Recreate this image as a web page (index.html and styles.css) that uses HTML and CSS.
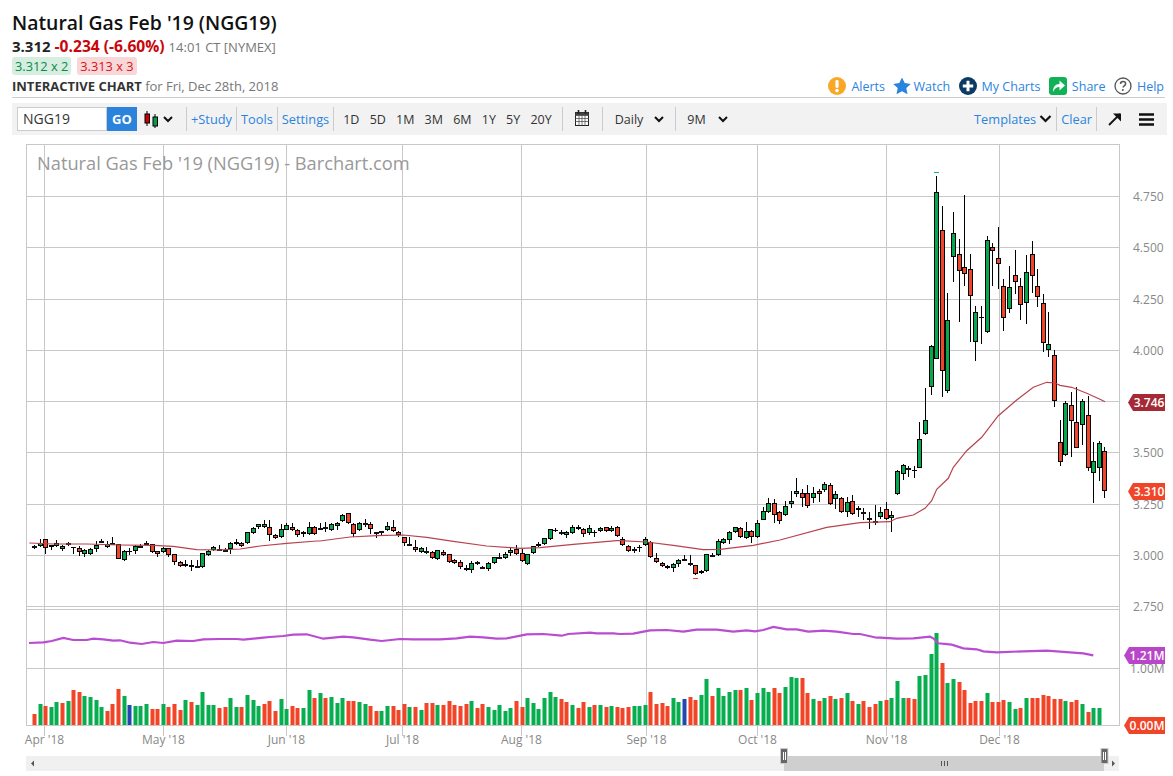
FILE: index.html
```html
<!DOCTYPE html>
<html lang="en">
<head>
<meta charset="utf-8">
<title>Natural Gas Feb '19 (NGG19)</title>
<link rel="stylesheet" href="styles.css">
</head>
<body>
<header class="head">
  <h1 class="title">Natural Gas Feb '19 (NGG19)</h1>
  <div class="quote">
    <span class="last">3.312</span>
    <span class="change">-0.234 (-6.60%)</span>
    <span class="time">14:01 CT [NYMEX]</span>
  </div>
  <div class="pills">
    <span class="pill bid">3.312 x 2</span>
    <span class="pill ask">3.313 x 3</span>
  </div>
  <div class="subrow">
    <div class="sub"><b>INTERACTIVE CHART</b> for Fri, Dec 28th, 2018</div>
    <nav class="links">
      <a class="link"><svg class="ico" viewBox="0 0 18 18"><circle cx="9" cy="9" r="9" fill="#f9a825"/><rect x="7.4" y="3" width="3.2" height="8" rx="1.4" fill="#fff"/><circle cx="9" cy="13.6" r="1.8" fill="#fff"/></svg><span class="alerts">Alerts</span></a>
      <a class="link"><svg class="ico star" viewBox="0 0 18 18"><path d="M9 .5l2.7 5.6 6.1.8-4.5 4.2 1.2 6.1L9 14.2l-5.5 3 1.2-6.1L.2 6.9l6.1-.8z" fill="#2a84de"/></svg><span>Watch</span></a>
      <a class="link"><svg class="ico" viewBox="0 0 18 18"><circle cx="9" cy="9" r="9" fill="#0b3a62"/><path d="M7.5 3.8h3v3.7h3.7v3h-3.7v3.7h-3v-3.7H3.800v-3h3.700z" fill="#fff"/></svg><span>My Charts</span></a>
      <a class="link"><svg class="ico" viewBox="0 0 18 18"><rect width="18" height="18" rx="3" fill="#10b255"/><path d="M4 15c0-5 2-8 6.500-8V3.500L16 8.500l-5.500 5V10C7.500 10 5.500 11.500 4 15z" fill="#fff"/></svg><span>Share</span></a>
      <a class="link"><svg class="ico" viewBox="0 0 18 18"><circle cx="9" cy="9" r="8" fill="none" stroke="#555" stroke-width="1.300"/><path d="M6.500 7c0-1.600 1.100-2.500 2.600-2.500s2.500.9 2.500 2.200c0 1.100-.7 1.600-1.400 2.100-.7.5-1 .9-1 1.700" fill="none" stroke="#555" stroke-width="1.500"/><circle cx="8.800" cy="13" r="1" fill="#555"/></svg><span>Help</span></a>
    </nav>
  </div>
</header>

<div class="toolbar">
  <div class="symbol"><span class="symbol-input">NGG19</span><span class="go">GO</span></div>
  <svg class="candle-ico" viewBox="0 0 16 18"><path d="M3 1v15M11 4v14" stroke="#000" stroke-width="1"/><rect x="1" y="4" width="4.500" height="9" fill="#c00" stroke="#000"/><rect x="9" y="7" width="4.500" height="9" fill="#0a9a48" stroke="#000"/></svg>
  <svg class="chev" viewBox="0 0 10 7"><path d="M1 1l4 4 4-4" fill="none" stroke="#111" stroke-width="2"/></svg>
  <i class="sep first"></i>
  <a class="tlink study">+Study</a><i class="sep"></i>
  <a class="tlink">Tools</a><i class="sep"></i>
  <a class="tlink">Settings</a><i class="sep"></i>
  <div class="ranges"><span>1D</span><span>5D</span><span>1M</span><span>3M</span><span>6M</span><span>1Y</span><span>5Y</span><span>20Y</span></div>
  <i class="sep"></i>
  <svg class="cal" viewBox="0 0 14 16"><rect x=".5" y="2.500" width="13" height="13" fill="#fff" stroke="#222"/><path d="M.5 5.500h13M.5 8.500h13M.5 11.500h13M4 5.500v10M7 5.500v10M10 5.500v10" stroke="#555" stroke-width=".8"/><rect x=".5" y="2.500" width="13" height="3" fill="#444"/><path d="M3.500 0v4M10.500 0v4" stroke="#222" stroke-width="1.600"/></svg>
  <i class="sep"></i>
  <span class="plain daily">Daily</span>
  <svg class="chev" viewBox="0 0 10 7"><path d="M1 1l4 4 4-4" fill="none" stroke="#111" stroke-width="2"/></svg>
  <i class="sep"></i>
  <span class="plain nine">9M</span>
  <svg class="chev" viewBox="0 0 10 7"><path d="M1 1l4 4 4-4" fill="none" stroke="#111" stroke-width="2"/></svg>
  <div class="tright">
    <a class="tlink">Templates</a>
    <svg class="chev wide" viewBox="0 0 12 8"><path d="M1 1l5 5 5-5" fill="none" stroke="#111" stroke-width="2.200"/></svg>
    <i class="sep"></i>
    <a class="tlink">Clear</a>
    <i class="sep"></i>
    <svg class="expand" viewBox="0 0 14 14"><path d="M1 13L12 2" stroke="#111" stroke-width="1.800"/><path d="M5 1.500h8v8z" fill="#111"/></svg>
    <svg class="menu" viewBox="0 0 15 13"><path d="M0 1.500h15M0 6.500h15M0 11.500h15" stroke="#111" stroke-width="2.400"/></svg>
  </div>
</div>

<div id="chart" class="chart"></div>
<script src="chart.js"></script>
</body>
</html>
```
FILE: styles.css
```css
* { box-sizing: border-box; }
html, body { margin: 0; padding: 0; background: #fff; }
body {
  width: 1173px;
  height: 776px;
  overflow: hidden;
  font-family: "Open Sans", "Liberation Sans", sans-serif;
  color: #333;
}
.head {
  margin: 0 8px 0 12px;
  padding-top: 9px;
  height: 98px;
  border-bottom: 1px solid #ccc;
}
.title {
  margin: 0;
  font-size: 19.4px;
  line-height: 27px;
  font-weight: 600;
  color: #111;
}
.quote { display: flex; align-items: baseline; gap: 4px; height: 20px; line-height: 20px; }
.last { font-size: 15px; font-weight: 700; color: #222; }
.change { font-size: 15.6px; font-weight: 700; color: #c8060c; }
.time { font-size: 13px; color: #777; }
.pills { display: flex; gap: 6px; margin-top: 1px; height: 19px; }
.pill { font-size: 12.8px; line-height: 18px; height: 18px; padding: 0 3px; border-radius: 3px; }
.bid { background: #d6eee0; color: #0a8a4a; }
.ask { background: #f8d7d8; color: #d8111a; }
.subrow { display: flex; justify-content: space-between; align-items: center; height: 20px; }
.sub { font-size: 13px; color: #777; margin-top: -1px; }
.sub b { color: #333; font-weight: 700; }
.links { display: flex; align-items: center; gap: 8.5px; margin-right: 1px; }
.link { display: flex; align-items: center; gap: 5px; font-size: 12.5px; color: #2a84de; }
.ico { width: 18px; height: 18px; display: block; }
.star { margin-right: -3px; }
.toolbar {
  display: flex;
  align-items: center;
  margin: 5px 6px 0 12px;
  height: 32px;
  padding-left: 5px;
  background: #f2f2f2;
  font-size: 13px;
}
.symbol { display: flex; height: 24px; width: 120px; }
.symbol-input {
  width: 90px;
  height: 24px;
  background: #fff;
  border: 1px solid #ccc;
  padding-left: 5px;
  font-size: 14px;
  line-height: 22px;
  color: #333;
}
.go {
  width: 30px;
  height: 24px;
  background: #2b83dc;
  color: #fff;
  font-weight: 700;
  font-size: 13px;
  line-height: 24px;
  text-align: center;
}
.candle-ico { width: 16px; height: 18px; margin-left: 7px; }
.chev { width: 10px; height: 7px; margin-left: 3px; }
.sep { display: block; width: 1px; height: 24px; background: #ccc; margin: 0 4px; }
.sep.first { margin-left: 13px; }
.tlink { color: #2a84de; font-size: 12.8px; white-space: nowrap; }
.ranges { display: flex; gap: 10.2px; margin: 0 6px 0 5px; color: #333; font-size: 12.5px; }
.plain { color: #333; font-size: 12.5px; }
.cal { width: 14px; height: 16px; margin: 0 9px 3px 8px; }
.daily { margin-left: 8px; }
.daily + .chev { margin-left: 11px; margin-right: 7px; }
.nine { margin-left: 7px; }
.nine + .chev { margin-left: 12px; }
.tright { display: flex; align-items: center; margin-left: auto; margin-right: 13px; }
.chev.wide { width: 13px; height: 8px; margin-left: 3px; margin-right: 0; }
.tright .sep + .tlink { margin-left: 0; }
.expand { width: 14px; height: 14px; margin: 0 17px 0 7px; }
.menu { width: 15px; height: 13px; }
.chart { height: 636px; margin-top: 5px; }
.chart svg { display: block; width: 1173px; height: 636px; }
.grid { stroke: #c8c8c8; stroke-width: 1; shape-rendering: crispEdges; }
.wick { stroke: #000; stroke-width: 1; shape-rendering: crispEdges; }
.body { stroke: #000; stroke-width: 1; shape-rendering: crispEdges; }
.up { fill: #05a84e; }
.dn { fill: #f0452a; }
.dark { fill: #111; }
.v-G { fill: #07ae4f; }
.v-R { fill: #f24527; }
.v-B { fill: #2346b0; }
.ma { fill: none; stroke: #b8434f; stroke-width: 1.2px; }
.avg { fill: none; stroke: #b94cd0; stroke-width: 2.2px; }
.watermark { font-size: 18.25px; fill: #999; }
.axis { font-size: 12px; fill: #888; }
.badge { font-size: 12px; font-weight: 600; fill: #fff; }
.b-ma { fill: #a52a35; }
.b-px { fill: #f04528; }
.b-avg { fill: #b945c9; }
.track { fill: #f0f0f0; }
.thumb { fill: #cfcfcf; }
.handle { fill: #666; stroke: #ccc; stroke-width: 1; }
.hline { stroke: #fff; stroke-width: 1; shape-rendering: crispEdges; }
.grip { stroke: #555; stroke-width: 1; shape-rendering: crispEdges; }
.arrow { fill: #555; }
.mark-up { fill: #16b768; }
.mark-dn { fill: #f0452a; }
```
FILE: chart.js
```js
// Candle and volume values, read in 1/3 px units against a base offset.
var NS = "http://www.w3.org/2000/svg";
var X0 = 34, STEP = 5.604;

var CANDLES = [
 [480, "D 199 203 195 206;G 190 199 178 200;R 178 203 178 221;G 196 202 196 209;G 190 199 181 200;G 199 208 195 212;D 190 196 186 198;+ 200 200 200 221;R 205 217 198 227;G 211 223 208 230;G 208 223 205 224;G 196 208 183 215;D 184 187 178 190;G 193 202 183 203;D 190 195 171 195;R 193 238 193 238;G 214 241 211 242;+ 214 214 205 224;G 199 214 196 221;D 198 199 193 203;D 190 193 184 196;R 193 217 193 218;R 214 223 212 230;G 205 217 201 218;R 205 226 204 230;R 223 247 221 254;R 247 259 244 260;G 253 259 241 262;R 256 262 241 272;D 257 258 241 260;G 220 262 220 265;G 214 226 211 227;G 202 211 198 212;D 206 208 196 209;D 211 214 205 217;G 190 208 187 222;G 187 193 178 194;R 190 199 186 200;G 157 190 157 191;G 145 160 140 161;G 133 142 131 148;G 133 142 121 145;R 142 166 121 183;R 166 175 162 178;G 148 172 133 174;G 136 150 130 151;R 142 151 129 153;R 151 166 148 172;R 157 163 153 170;G 142 163 126 164;R 142 163 138 165"],
 [480, "D 145 147 130 150;D 142 145 127 155;G 133 151 130 152;G 130 139 126 150;G 105 124 102 125;R 100 130 100 131;R 133 163 130 172;G 130 151 127 152;D 129 130 118 140;R 133 148 127 161;D 157 158 157 174;D 154 156 154 168;G 139 151 126 153;R 142 154 121 157;R 157 166 153 170;R 172 190 172 197;D 191 193 172 198;R 202 211 181 215;G 205 217 202 218;D 214 216 201 221;R 217 235 214 236;G 211 238 211 240;R 217 226 211 228;R 223 247 223 248;R 241 250 238 253;R 247 262 241 266;R 265 271 256 272;G 250 271 244 278;D 247 250 242 255;D 262 265 257 268;G 250 268 247 272;G 232 250 232 251;D 232 234 220 236;G 223 235 216 236;G 211 220 205 228;R 208 223 196 226;R 220 244 208 247;G 223 253 223 254;G 199 220 197 221;G 192 196 187 202;G 175 193 175 194;G 148 178 148 179;+ 149 149 143 155;D 155 156 150 165;G 157 166 154 175;G 142 160 136 161;R 142 148 136 149;R 148 163 145 170;G 145 160 136 164;+ 156 156 150 170;G 145 154 140 155;R 142 154 142 155;G 145 154 139 157;R 142 169 139 170"],
 [470, "R 208 226 201 227;R 229 244 226 247;D 238 241 232 250;+ 232 232 226 247;G 208 226 202 227;R 217 260 214 265;R 265 277 250 280;R 280 289 277 290;R 289 295 285 296;G 283 295 280 305;G 271 283 268 290;D 268 270 256 274;D 280 283 256 289;R 286 313 286 314;G 304 310 300 311;G 253 304 253 305;D 256 258 250 260;G 214 256 208 259;G 208 220 205 221;G 187 211 184 222;G 172 187 170 188;R 175 202 172 205;G 184 205 156 208;R 184 202 181 218;G 160 202 151 203;G 124 150 112 151;G 100 127 85 128;R 100 136 88 160;R 127 154 124 162;G 109 136 94 138;G 94 103 64 113;G 64 73 24 80;R 70 85 58 112;R 70 109 45 115;G 70 85 50 100;R 64 73 58 95;G 43 61 37 66;R 46 103 40 105;G 73 88 64 117;R 85 127 82 130;G 97 127 82 140;R 94 133 74 135;G 115 121 109 140;D 127 129 115 150;D 145 147 125 178;D 154 156 106 164;G 127 142 110 148;R 118 148 97 151;G 136 145 124 185"],
 [380, "G 274 343 270 344;G 256 283 253 300;D 263 268 257 290;+ 271 271 257 295;G 178 263 126 265;G 121 163 25 164"],
 [160, "G 559 682 555 704;G 97 598 48 598;R 211 634 138 710;G 481 694 400 700;G 220 292 156 365;R 283 334 238 485;R 322 343 105 377;R 328 409 283 545;G 457 547 438 602;+ 472 472 438 552;G 241 517 229 520;R 262 274 250 377;R 295 313 202 388;R 379 475 358 512;G 382 448 319 458;R 346 367 271 403;R 379 436 355 479;G 337 430 286 491;R 283 349 243 398;R 379 412 328 440;R 430 550 403 577;G 553 571 457 592;R 586 722 570 741"],
 [380, "R 187 247 120 257;G 70 226 63 227;R 76 124 37 230;R 127 203 21 205;G 64 136 58 195;R 106 265 48 272;G 244 280 187 368;G 190 265 184 302;R 214 334 202 353"]
];

var VOLUME = [
 [375, "R342 G312 R318 G321 G306 R309 G303 R270 R276 G288 G291 G300 G321 R333 R312 R267 G288 B315 G318 G318 G312 R327 R327 G312 R321 R312 R330 G300 R306 G315 G276 G315 G315 R324 R321 G294 G321 R321 G285 G300 G318 R312 R303 R333 G297 G327 R318 R324 G324 G270 R294 G279 R294 G291 G309 G294 R303 R303 G306 G312 R318 R333 G333 G318 R318 R330 R312 G321 R321 G330 R309 R309 G315"],
 [345, "R285 R273 R285 R288 R282 G273 R294 R282 G291 G300 G285 G303 G294 R273 R291 G264 G279 G297 G264 G246 G261 R267 R276 G285 R294 R276 G291 R285 G285 R291 G288 R291 R294 R291 G288 G288 G285 R246 R282 R279 R288 G264 G276 B267 R261 R270 G255 G207 R258 G234 G258 G246 G240 R240 G234 R270 G249 G234 G246 R234 R249 G231 G201 G204 R204 R249 G267 R273 G264 R258 G267 R264 G249 R273 G282 R273 R291 R282"],
 [375, "G303 R300 G294 G243 G294 R294 R297 G228 G225 G162 G99 R189 G249 G237 R246 R270 R309 R303 R303 G279 R306 R306 R300 G306 G327 R324 G294 R294 R294 R285 R288 R297 R297 G303 R306 R300 G312 R336 G324 G324"]
];

// Polylines as [originX, originY, "x,y x,y ..."] in 3x crop units.
var MA = [
 [20, 480, "28,189 100,192 200,192 300,195 400,196 460,199 530,209 590,210 660,207 720,198 800,190 890,183"],
 [320, 480, "0,183 90,171 170,167 250,165 320,172 400,184 500,198 600,205 660,203 760,193 890,182"],
 [620, 470, "0,212 80,216 160,226 250,239 300,238 400,226 480,210 620,172 720,158 810,155"],
 [880, 380, "50,415 100,405 135,385 155,362 170,328 205,295 220,262 260,212 305,172 355,107 410,60 460,22 500,7 525,9 540,16 575,22 620,40 660,58 675,65"]
];
var AVG = [
 [0, 600, "87,129 130,127 155,123 190,114 220,120 260,120 280,116 310,118 340,122 360,121 390,128 425,132 460,126 490,129 530,122 580,123 610,118 660,117 710,117 730,119 790,113 810,111 850,108 880,104 920,103 970,116 1030,110 1060,112 1110,119 1145,123 1200,117 1240,118 1310,118"],
 [440, 610, "0,88 50,85 90,80 130,82 170,86 200,85 260,73 310,72 365,77 385,72 450,68 470,70 520,70 540,72 580,71 630,61 680,60 730,65 770,59 830,59 880,65 920,61 945,64 970,60 1000,51 1040,58 1070,58 1105,65 1150,62 1190,65 1240,72 1260,72 1310,83"],
 [880, 600, "0,113 50,116 100,115 150,110 160,115 175,130 215,134 250,145 290,148 310,154 350,157 430,154 500,152 570,157 610,160 640,166"]
];

var svg = document.createElementNS(NS, "svg");
svg.setAttribute("viewBox", "0 140 1173 636");

function el(name, cls, attrs, parent) {
  var n = document.createElementNS(NS, name);
  if (cls) n.setAttribute("class", cls);
  for (var k in attrs) n.setAttribute(k, attrs[k]);
  (parent || svg).appendChild(n);
  return n;
}
function line(cls, x1, y1, x2, y2) { return el("line", cls, { x1: x1, y1: y1, x2: x2, y2: y2 }); }
function text(cls, x, y, s, anchor) {
  var t = el("text", cls, { x: x, y: y, "text-anchor": anchor || "start" });
  t.textContent = s;
  return t;
}
function rect(cls, x, y, w, h) { return el("rect", cls, { x: x, y: y, width: w, height: h }); }

/* ---------- frame & grid ---------- */
var L = 26.5, R = 1119.5;
var priceY = [[197, "4.750"], [248, "4.500"], [300, "4.250"], [351, "4.000"], [402, "3.750"], [453, "3.500"], [505, "3.250"], [556, "3.000"], [607, "2.750"]];
var months = [[44.5, "Apr '18"], [163.5, "May '18"], [286.5, "Jun '18"], [402.5, "Jul '18"], [521.5, "Aug '18"], [646.5, "Sep '18"], [757.5, "Oct '18"], [886.5, "Nov '18"], [999.5, "Dec '18"]];

months.forEach(function (m) {
  line("grid", m[0], 144, m[0], 736);
  text("axis", m[0], 744, m[1], "middle");
});
priceY.forEach(function (p) {
  line("grid", L, p[0] - 0.5, R, p[0] - 0.5);
  if (p[1] !== "3.750") text("axis", 1133, p[0] + 4, p[1]);
});
line("grid", L, 144.5, R, 144.5);
line("grid", L, 144, L, 726);
line("grid", R, 144, R, 726);
line("grid", L, 609.5, R, 609.5);
line("grid", L, 668.5, R, 668.5);
line("grid", L, 725.5, R, 725.5);
text("axis", 1130, 673, "1.00M");

text("watermark", 37, 170, "Natural Gas Feb '19 (NGG19) - Barchart.com");

/* ---------- volume bars ---------- */
var vi = 0;
VOLUME.forEach(function (chunk) {
  chunk[1].split(" ").forEach(function (v) {
    var h = Math.round((chunk[0] - parseInt(v.slice(1), 10)) / 3);
    var x = Math.round(X0 + vi * STEP) - 1.5;
    rect("v-" + v[0], x, 725 - h, 4, h);
    vi++;
  });
});

/* ---------- indicators under candles ---------- */
function poly(cls, series) {
  var pts = [];
  series.forEach(function (s) {
    s[2].split(" ").forEach(function (p) {
      var a = p.split(",");
      pts.push((s[0] + a[0] / 3).toFixed(1) + "," + (s[1] + a[1] / 3).toFixed(1));
    });
  });
  el("polyline", cls, { points: pts.join(" ") });
}
poly("avg", AVG);

/* ---------- candles ---------- */
var ci = 0;
CANDLES.forEach(function (chunk) {
  var base = chunk[0];
  chunk[1].split(";").forEach(function (c) {
    var f = c.split(" ");
    var Y = function (v) { return Math.round(base + v / 3); };
    var x = Math.round(X0 + ci * STEP);
    var top = Y(+f[1]), bot = Y(+f[2]), hi = Y(+f[3]), lo = Y(+f[4]);
    line("wick", x + 0.5, hi, x + 0.5, lo);
    if (f[0] === "+") {
      line("wick", x - 2, top + 0.5, x + 3, top + 0.5);
    } else if (f[0] === "D") {
      rect("dark", x - 2, top, 5, Math.max(2, bot - top));
    } else {
      rect("body " + (f[0] === "G" ? "up" : "dn"), x - 1.5, top + 0.5, 4, Math.max(1, bot - top - 1));
    }
    ci++;
  });
});
poly("ma", MA);

/* ---------- hi / lo markers ---------- */
rect("mark-up", 934, 172, 5, 1);
rect("mark-dn", 693, 578, 5, 1);

/* ---------- badges ---------- */
function badge(cls, x0, y, w, s) {
  el("path", cls, { d: "M" + x0 + " " + (y + 8.5) + "l5 -8.5H" + (x0 + w) + "v17H" + (x0 + 5) + "z" });
  text("badge", x0 + 5 + (w - 5) / 2, y + 13, s, "middle");
}
badge("b-ma", 1128, 394, 37, "3.746");
badge("b-px", 1128, 483, 37, "3.310");
badge("b-avg", 1124, 647, 41, "1.21M");
badge("b-px", 1124, 717, 41, "0.00M");

/* ---------- scroller ---------- */
rect("track", 26, 756, 1093, 15);
rect("thumb", 784, 756, 320, 15);
[941.5, 944.5, 947.5].forEach(function (x) { line("grip", x, 761, x, 766); });
[780.5, 1101].forEach(function (x) {
  rect("handle", x, 748.5, 7, 15);
  line("hline", x + 2.5, 752, x + 2.5, 760);
  line("hline", x + 4.5, 752, x + 4.5, 760);
});
el("path", "arrow", { d: "M31 763.500l3 -3v6z" });
el("path", "arrow", { d: "M1115 763.500l-3 -3v6z" });

document.getElementById("chart").appendChild(svg);
```
